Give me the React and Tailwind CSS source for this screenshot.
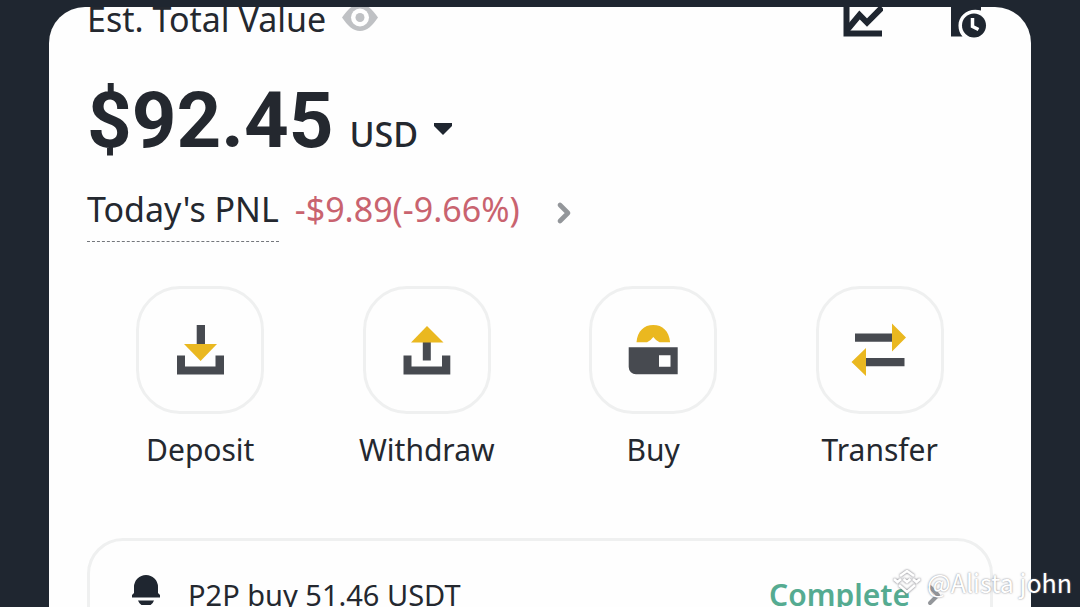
import { ChevronRight } from 'lucide-react'

function DepositIcon() {
  return (
    <svg viewBox="0 0 56 56" className="w-14 h-14" aria-hidden="true">
      <path d="M5 33.5h8v11h30.5v-11H52v19H5z" fill="#474a50" />
      <path d="M24.7 3h8.3v20h-8.3z" fill="#474a50" />
      <path d="M12 22h33L28.6 39z" fill="#eab820" />
    </svg>
  )
}

function WithdrawIcon() {
  return (
    <svg viewBox="0 0 56 56" className="w-14 h-14" aria-hidden="true">
      <path d="M4.5 33.5h8v11H43v-11h8.3v19H4.5z" fill="#474a50" />
      <path d="M23.8 19h8v19.5h-8z" fill="#474a50" />
      <path d="M12 20.5h32.5L28 4z" fill="#eab820" />
    </svg>
  )
}

function BuyIcon() {
  return (
    <svg viewBox="0 0 56 56" className="w-14 h-14" aria-hidden="true">
      <path d="M11.5 20.3C12.5 9 19 3 28.3 3s15.800 6 16.800 17.300H34.500q-3-1-6.200-5.300-3.200 4.300-6.200 5.300z" fill="#eab820" />
      <path
        fillRule="evenodd"
        d="M3.7 25.3h49v27H11a7.3 7.3 0 0 1-7.3-7.3zM34 33.3v11.5h11.5V33.3z"
        fill="#474a50"
      />
    </svg>
  )
}

function TransferIcon() {
  return (
    <svg viewBox="0 0 56 56" className="w-14 h-14 overflow-visible" aria-hidden="true">
      <path d="M3 11.5h38v8.3H3zM13 36h39.5v8.3H13z" fill="#474a50" />
      <path d="M40 1.5v28L54 15.5zM14 26v28L-.5 40z" fill="#eab820" />
    </svg>
  )
}

const actions = [
  { label: 'Deposit', Icon: DepositIcon },
  { label: 'Withdraw', Icon: WithdrawIcon },
  { label: 'Buy', Icon: BuyIcon },
  { label: 'Transfer', Icon: TransferIcon },
]

function Header() {
  return (
    <header className="flex items-center justify-between h-10 -mt-2">
      <div className="flex items-center gap-4">
        <h1 className="text-[34px] leading-10">Est. Total Value</h1>
        <button type="button" aria-label="Hide balance">
          <svg viewBox="0 0 36 40" className="w-9 h-10" aria-hidden="true">
            <path d="M0 18.500C6 10 11 5 18 5S30 10 36 18.500C30 27 25 32 18 32S6 27 0 18.500z" fill="#bfc1c4" />
            <circle cx="18" cy="18.500" r="9" fill="#fff" />
            <circle cx="18" cy="18.500" r="4.500" fill="#bfc1c4" />
          </svg>
        </button>
      </div>
      <div className="flex items-center gap-[68px] pr-[6px]">
        <button type="button" aria-label="Analysis">
          <svg viewBox="0 0 40 40" className="w-10 h-10" aria-hidden="true">
            <path d="M.5 0h6v31.500H39v6H.5z" fill="#1f2630" />
            <path d="M4 31L16.500 16l7.500 7.500L39 8.500" fill="none" stroke="#1f2630" strokeWidth="6" />
          </svg>
        </button>
        <button type="button" aria-label="Order history">
          <svg viewBox="0 0 36 40" className="w-9 h-10" aria-hidden="true">
            <path d="M0 0h30v11.500C17 8 7 17 7.500 27c0 4 1.500 7.500 4 10.500H0z" fill="#1f2630" />
            <circle cx="23" cy="26.500" r="12" fill="#1f2630" />
            <path d="M21.500 19v8.500l6 3" fill="none" stroke="#fff" strokeWidth="3.5" />
          </svg>
        </button>
      </div>
    </header>
  )
}

function Balance() {
  return (
    <section>
      <div className="flex items-baseline gap-4 mt-[42px] font-['Roboto',sans-serif]">
        <span className="text-[78px] leading-20 font-bold">$92.45</span>
        <button type="button" className="flex items-center gap-4 text-[34px] font-medium font-['Noto_Sans',sans-serif]">
          USD
          <svg viewBox="0 0 18 12" className="w-[18px] h-3 mb-3" aria-hidden="true">
            <path d="M0 0h18v3L9 12 0 3z" fill="#1f2630" />
          </svg>
        </button>
      </div>
      <div className="flex items-start mt-6 text-[34px] leading-12">
        <a href="#pnl" className="pb-2 border-b border-dashed border-[#74777c]">
          Today's PNL
        </a>
        <span className="ml-4 text-[#c9636f]">-$9.89(-9.66%)</span>
        <button type="button" aria-label="PNL details" className="flex items-end ml-7 h-11">
          <ChevronRight className="w-8 h-8 text-[#93969a]" strokeWidth={3.5} />
        </button>
      </div>
    </section>
  )
}

function Actions() {
  return (
    <nav className="grid grid-cols-4 mt-11">
      {actions.map(({ label, Icon }) => (
        <button key={label} type="button" className="flex flex-col items-center gap-4">
          <span className="flex items-center justify-center w-32 h-32 rounded-[44px] border-[3px] border-[#eff0f0]">
            <Icon />
          </span>
          <span className="text-[30px] leading-10">{label}</span>
        </button>
      ))}
    </nav>
  )
}

function Notification() {
  return (
    <section className="flex items-start mt-17 px-10 py-8 rounded-[36px] border-[3px] border-[#eff0f0] text-[30px] leading-11">
      <svg viewBox="0 0 28 32" className="w-7 h-8 ml-[2px] mr-7 shrink-0" aria-hidden="true">
        <path d="M2 20V14a12 12 0 0 1 24 0v6l2 2V24.500H0V22z" fill="#1f2630" />
        <path d="M6 27.500h16a8.500 8.500 0 0 1-16 0z" fill="#1f2630" />
      </svg>
      <span className="text-[29px]">P2P buy 51.46 USDT</span>
      <a href="#order" className="flex items-center gap-2 ml-auto font-semibold text-[#55ab91]">
        Complete
        <ChevronRight className="w-8 h-8 text-[#93969a]" strokeWidth={3} />
      </a>
    </section>
  )
}

function Watermark() {
  return (
    <div className="absolute bottom-[6px] right-2 flex items-center gap-[6px] text-[25px] text-white font-['Noto_Sans_CJK_SC',sans-serif] [text-shadow:0_0_2px_#77777f]">
      <svg viewBox="0 0 28 24" className="w-7 h-6 drop-shadow-[0_0_1px_#66666f]" fill="none" stroke="#fff" strokeWidth="2.5" aria-hidden="true">
        <path d="M7 6l7-5 7 5M1 9l3.500 3L8 9M10.500 9l3.500 3 3.500-3M20 9l3.500 3L27 9M6 15l8 7 8-7" />
      </svg>
      @Alista john
    </div>
  )
}

export default function App() {
  return (
    <div className="relative h-screen overflow-hidden bg-[#1f2630] px-[49px] pt-[7px] font-['Noto_Sans',sans-serif] text-[#24282f]">
      <main className="min-h-full overflow-hidden rounded-t-[36px] bg-[#fefefe] px-[38px]">
        <Header />
        <Balance />
        <Actions />
        <Notification />
      </main>
      <Watermark />
    </div>
  )
}
